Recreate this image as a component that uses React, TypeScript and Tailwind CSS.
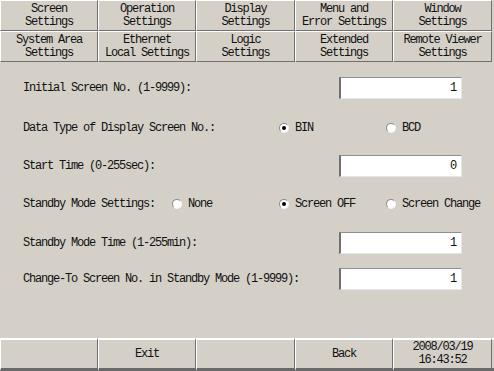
import React from "react";

const font = "font-['Liberation_Mono',monospace] text-[12px] tracking-[-1.2px] text-[#111]";

function Tab({ l1, l2 }: { l1: string; l2: string }) {
  return (
    <div className="h-[31px] flex flex-col items-center justify-center leading-[13px] bg-[#d4d0c8] border-t border-l border-t-white border-l-white border-r border-b border-r-[#707070] border-b-[#707070]">
      <span>{l1}</span>
      <span>{l2}</span>
    </div>
  );
}

function Btn({ children }: { children?: React.ReactNode }) {
  return (
    <div className="h-[33px] flex flex-col items-center justify-center leading-[13px] bg-[#d4d0c8] border-t-2 border-l border-t-white border-l-white border-r border-r-[#707070] border-b-[3px] border-b-[#6a6a6a]">
      {children}
    </div>
  );
}

function Input({ value }: { value: string }) {
  return (
    <div className="w-[123px] h-[22px] bg-white flex items-center justify-end pr-[5px] border-l-2 border-t border-l-[#707070] border-t-[#909090] border-r border-b border-r-[#e6e6e6] border-b-[#e6e6e6]">
      {value}
    </div>
  );
}

function Radio({ checked, label }: { checked?: boolean; label: string }) {
  return (
    <div className="flex items-center gap-[6px]">
      <div className="w-[10px] h-[10px] rounded-full bg-white border border-t-[#8a8a8a] border-l-[#8a8a8a] border-r-[#f4f4f4] border-b-[#f4f4f4] flex items-center justify-center">
        {checked && <div className="w-[4px] h-[4px] rounded-full bg-black" />}
      </div>
      <span>{label}</span>
    </div>
  );
}

function InputRow({ label, value, mt }: { label: string; value: string; mt: string }) {
  return (
    <div className={`h-[22px] flex items-center pl-[23px] pr-[32px] ${mt}`}>
      <span className="flex-1">{label}</span>
      <Input value={value} />
    </div>
  );
}

export default function App() {
  return (
    <div className={`w-[494px] h-[371px] bg-[#d4d0c8] flex flex-col ${font}`}>
      <div className="grid grid-cols-[98px_98px_99px_98px_99px]">
        <Tab l1="Screen" l2="Settings" />
        <Tab l1="Operation" l2="Settings" />
        <Tab l1="Display" l2="Settings" />
        <Tab l1="Menu and" l2="Error Settings" />
        <Tab l1="Window" l2="Settings" />
        <Tab l1="System Area" l2="Settings" />
        <Tab l1="Ethernet" l2="Local Settings" />
        <Tab l1="Logic" l2="Settings" />
        <Tab l1="Extended" l2="Settings" />
        <Tab l1="Remote Viewer" l2="Settings" />
      </div>
      <div className="flex-1 flex flex-col pt-[15px]">
        <InputRow label="Initial Screen No. (1-9999):" value="1" mt="" />
        <div className="h-[22px] mt-[18px] pl-[23px] grid grid-cols-[256px_107px_1fr] items-center">
          <span>Data Type of Display Screen No.:</span>
          <Radio checked label="BIN" />
          <Radio label="BCD" />
        </div>
        <InputRow label="Start Time (0-255sec):" value="0" mt="mt-[16px]" />
        <div className="h-[22px] mt-[16px] pl-[23px] grid grid-cols-[149px_107px_107px_1fr] items-center">
          <span>Standby Mode Settings:</span>
          <Radio label="None" />
          <Radio checked label="Screen OFF" />
          <Radio label="Screen Change" />
        </div>
        <InputRow label="Standby Mode Time (1-255min):" value="1" mt="mt-[17px]" />
        <InputRow label="Change-To Screen No. in Standby Mode (1-9999):" value="1" mt="mt-[14px]" />
      </div>
      <div className="grid grid-cols-[98px_98px_99px_98px_99px_2px]">
        <Btn />
        <Btn>Exit</Btn>
        <Btn />
        <Btn>Back</Btn>
        <Btn>
          <span>2008/03/19</span>
          <span>16:43:52</span>
        </Btn>
        <div className="h-[33px] border-t-2 border-t-white border-b-[3px] border-b-[#6a6a6a]" />
      </div>
    </div>
  );
}
